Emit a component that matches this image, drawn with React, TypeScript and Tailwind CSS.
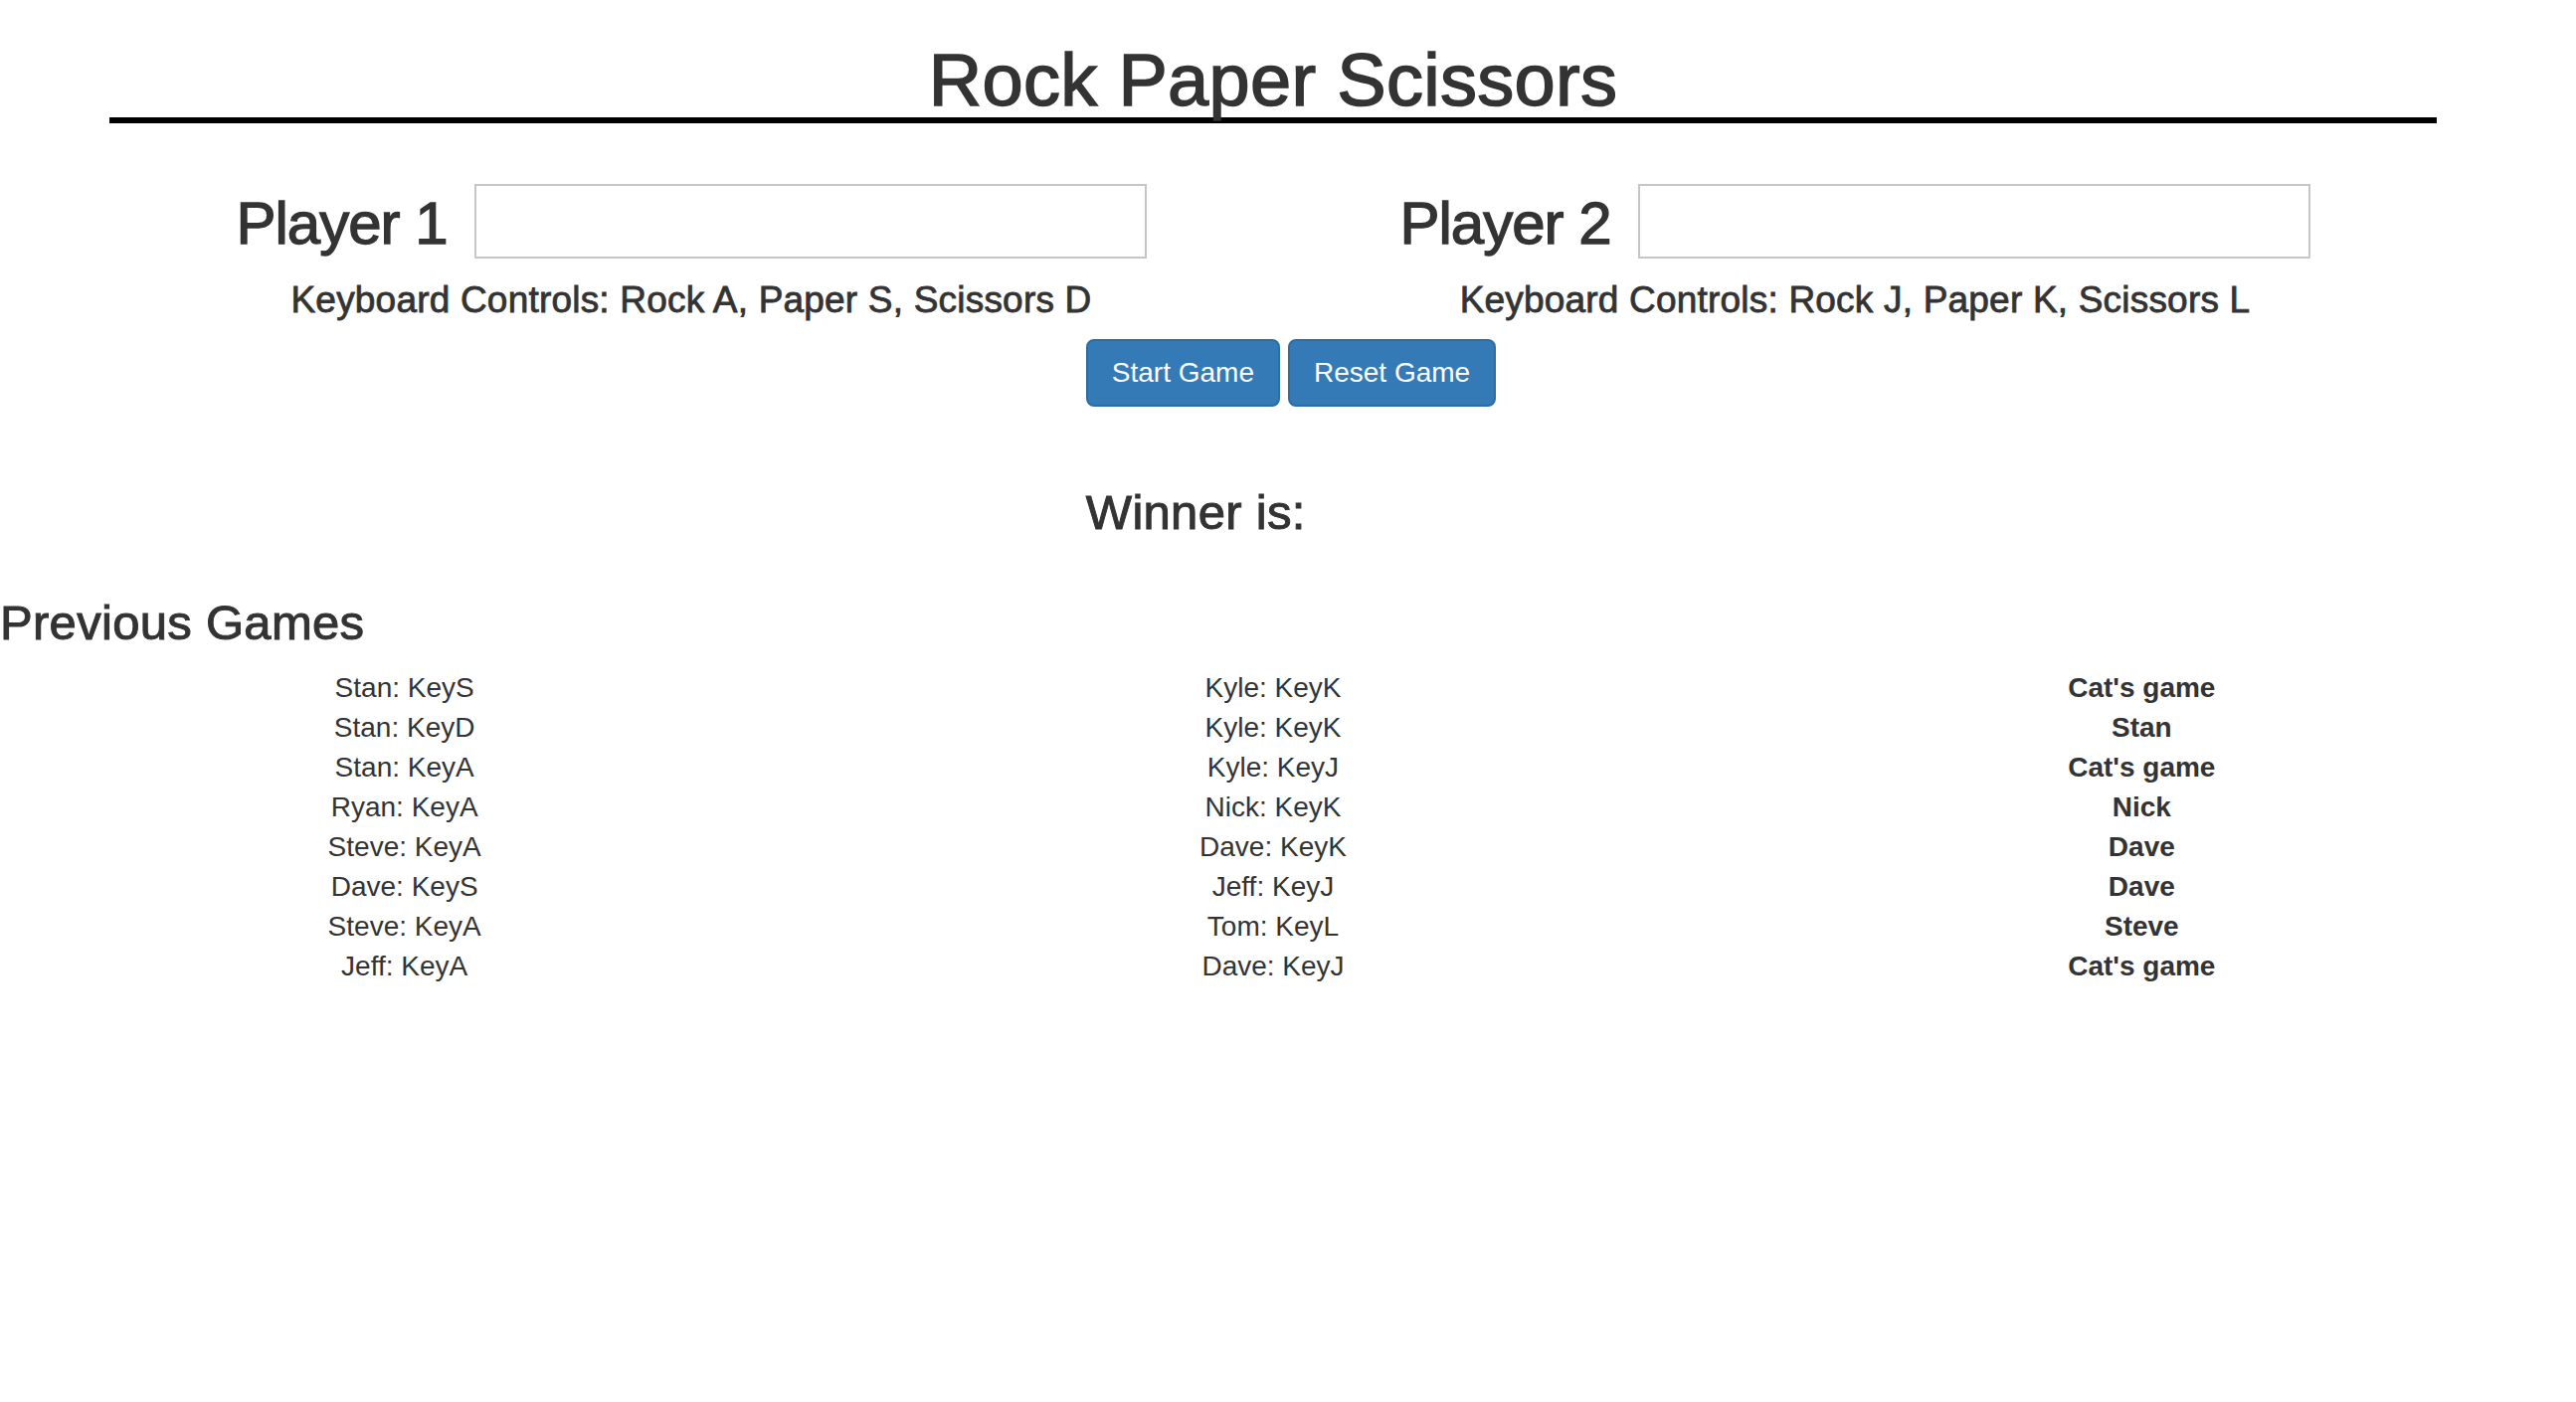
import React from "react";

type Game = {
  player1: string;
  player2: string;
  winner: string;
};

const games: Game[] = [
  { player1: "Stan: KeyS", player2: "Kyle: KeyK", winner: "Cat's game" },
  { player1: "Stan: KeyD", player2: "Kyle: KeyK", winner: "Stan" },
  { player1: "Stan: KeyA", player2: "Kyle: KeyJ", winner: "Cat's game" },
  { player1: "Ryan: KeyA", player2: "Nick: KeyK", winner: "Nick" },
  { player1: "Steve: KeyA", player2: "Dave: KeyK", winner: "Dave" },
  { player1: "Dave: KeyS", player2: "Jeff: KeyJ", winner: "Dave" },
  { player1: "Steve: KeyA", player2: "Tom: KeyL", winner: "Steve" },
  { player1: "Jeff: KeyA", player2: "Dave: KeyJ", winner: "Cat's game" },
];

function PlayerPanel({ label, controls }: { label: string; controls: string }) {
  return (
    <div className="flex flex-col items-center">
      <div className="flex items-center gap-[27px]">
        <h2 className="text-[60px] leading-[66px] tracking-[-1px] font-medium translate-y-[2px] [-webkit-text-stroke:1.3px_#333333]">
          {label}
        </h2>
        <input
          type="text"
          className="w-[676px] h-[75px] border-2 border-[#c6c6c6] bg-white outline-none px-3 text-[28px]"
        />
      </div>
      <h4 className="mt-[22px] text-[37px] leading-[40px] tracking-[0.2px] font-medium [-webkit-text-stroke:0.8px_#333333]">
        {controls}
      </h4>
    </div>
  );
}

export default function App() {
  return (
    <div className="min-h-screen w-full bg-white text-[#333333] font-['Liberation_Sans',Arial,Helvetica,sans-serif]">
      <div className="ml-[110px] w-[2340px]">
        <h1 className="mt-[44px] text-[74px] leading-[74px] tracking-[0.3px] font-medium text-center border-b-[6px] border-black [-webkit-text-stroke:1.5px_#333333]">
          Rock Paper Scissors
        </h1>

        <div className="grid grid-cols-2 mt-[61px]">
          <PlayerPanel label="Player 1" controls="Keyboard Controls: Rock A, Paper S, Scissors D" />
          <PlayerPanel label="Player 2" controls="Keyboard Controls: Rock J, Paper K, Scissors L" />
        </div>
      </div>

      <div className="mt-[19px] mx-auto pl-[6px] w-fit flex flex-col items-start">
        <div className="flex gap-[8px]">
          <button
            type="button"
            className="px-[24px] py-[12px] text-[28px] leading-[40px] text-white bg-[#337ab7] border-2 border-[#2e6da4] rounded-[8px]"
          >
            Start Game
          </button>
          <button
            type="button"
            className="px-[24px] py-[12px] text-[28px] leading-[40px] text-white bg-[#337ab7] border-2 border-[#2e6da4] rounded-[8px]"
          >
            Reset Game
          </button>
        </div>
        <h3 className="mt-[80px] text-[49px] leading-[53px] tracking-[0.3px] font-medium [-webkit-text-stroke:1px_#333333]">
          Winner is:
        </h3>
      </div>

      <h3 className="mt-[58px] text-[49px] leading-[53px] tracking-[0.3px] font-medium [-webkit-text-stroke:1px_#333333]">
        Previous Games
      </h3>

      <div className="mt-[19px] -ml-[30px] w-[2620px] grid grid-cols-3 text-[28px] leading-[40px]">
        <div className="flex flex-col items-center">
          {games.map((g, i) => (
            <div key={i}>{g.player1}</div>
          ))}
        </div>
        <div className="flex flex-col items-center">
          {games.map((g, i) => (
            <div key={i}>{g.player2}</div>
          ))}
        </div>
        <div className="flex flex-col items-center font-bold">
          {games.map((g, i) => (
            <div key={i}>{g.winner}</div>
          ))}
        </div>
      </div>
    </div>
  );
}
